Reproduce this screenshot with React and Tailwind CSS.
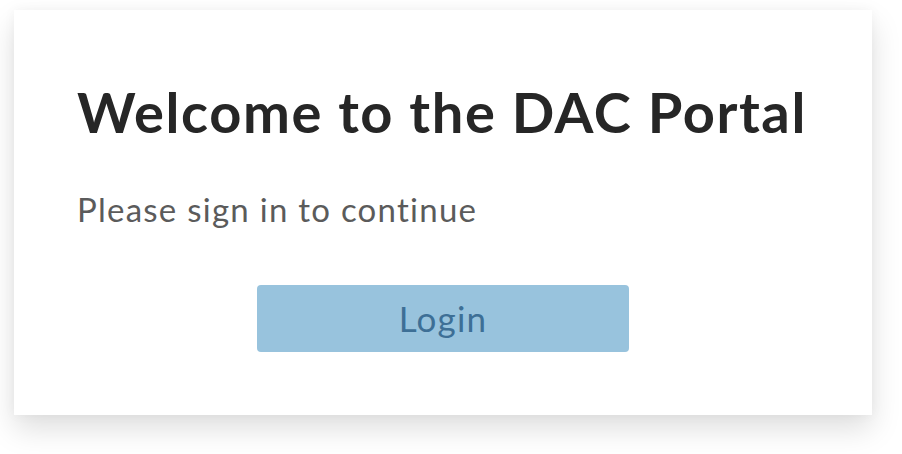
export default function App() {
  return (
    <div className="w-[902px] h-[454px] bg-white pt-[10px] pl-[14px]" style={{ fontFamily: 'Lato, "Noto Sans", sans-serif' }}>
      <div className="w-[858px] h-[405px] bg-white shadow-[0_14px_28px_rgba(0,0,0,0.13),0_0_12px_rgba(0,0,0,0.04)] pl-[63px] pt-[74px]">
        <h1 className="text-[56px] leading-none font-bold text-[#262626] tracking-[1.6px]">Welcome to the DAC Portal</h1>
        <p className="mt-[53px] text-[33px] leading-none text-[#5b5b5b] tracking-[1.25px]">Please sign in to continue</p>
        <div className="flex justify-center pr-[63px] mt-[59px]">
          <button className="w-[372px] h-[67px] rounded-[4px] bg-[#98c3dd] text-[#3d6f96] text-[35px] leading-none tracking-[1.2px]">Login</button>
        </div>
      </div>
    </div>
  );
}
